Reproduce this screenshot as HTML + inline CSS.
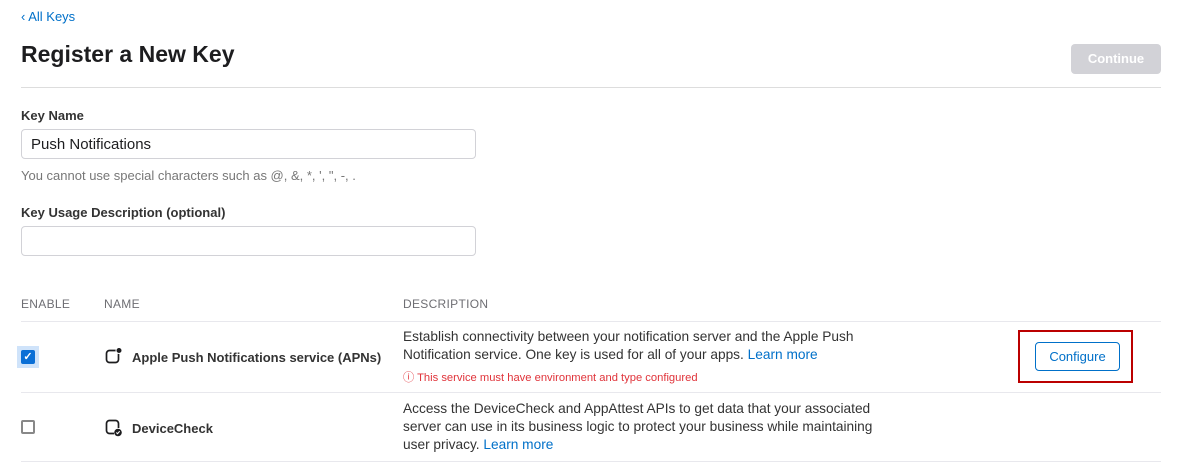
<!DOCTYPE html>
<html><head><meta charset="utf-8"><style>
*{margin:0;padding:0;box-sizing:border-box}
body{width:1183px;height:464px;background:#fff;font-family:"Liberation Sans",sans-serif;color:#1d1d1f;position:relative;overflow:hidden}
.a{position:absolute;white-space:nowrap}
.blue{color:#0070c9}
.inp{position:absolute;left:21px;width:455px;height:30px;border:1px solid #d2d2d7;border-radius:4px;font-size:15px;padding:6px 9px}
.lbl{font-size:13px;font-weight:bold;color:#333}
.hd{font-size:12px;color:#6e6e73;letter-spacing:.3px}
.hr{position:absolute;left:21px;width:1140px;height:1px;background:#e8e8ed}
.desc{font-size:13.7px;line-height:18px;color:#333}
</style></head><body>
<div class="a blue" style="left:21px;top:9px;font-size:13px">‹ All Keys</div>
<div class="a" style="left:21px;top:41px;font-size:23px;font-weight:bold">Register a New Key</div>
<div class="a" style="left:1071px;top:44px;width:90px;height:30px;background:#d2d2d7;border-radius:4px;color:#fff;font-size:13px;font-weight:bold;text-align:center;line-height:30px">Continue</div>
<div class="hr" style="top:87px;background:#ddd"></div>
<div class="a lbl" style="left:21px;top:108px">Key Name</div>
<div class="inp" style="top:129px">Push Notifications</div>
<div class="a" style="left:21px;top:168px;font-size:13px;color:#777">You cannot use special characters such as @, &amp;, *, ', ", -, .</div>
<div class="a lbl" style="left:21px;top:205px">Key Usage Description (optional)</div>
<div class="inp" style="top:226px"></div>
<div class="a hd" style="left:21px;top:297px">ENABLE</div>
<div class="a hd" style="left:104px;top:297px">NAME</div>
<div class="a hd" style="left:403px;top:297px">DESCRIPTION</div>
<div class="hr" style="top:321px"></div>
<div class="hr" style="top:392px"></div>
<div class="hr" style="top:461px"></div>
<div class="a" style="left:17px;top:346px;width:22px;height:22px;background:#cfe3fa"></div>
<div class="a" style="left:21px;top:350px;width:14px;height:14px;background:#0a6fd6;border-radius:2px;color:#fff;font-size:11px;text-align:center;line-height:14px;font-weight:bold">✓</div>
<div class="a" style="left:21px;top:420px;width:14px;height:14px;border:2px solid #888;border-radius:2px"></div>
<svg class="a" style="left:105px;top:347px" width="18" height="18" viewBox="0 0 18 18"><rect x="1.5" y="3.5" width="12" height="12" rx="3" fill="none" stroke="#1d1d1f" stroke-width="1.7"/><circle cx="14" cy="3.5" r="3" fill="#1d1d1f" stroke="#fff" stroke-width="1"/></svg>
<svg class="a" style="left:105px;top:419px" width="20" height="18" viewBox="0 0 20 18"><path d="M9 14.5H4.5a3 3 0 0 1-3-3v-7a3 3 0 0 1 3-3h6a3 3 0 0 1 3 3V9" fill="none" stroke="#1d1d1f" stroke-width="1.7"/><circle cx="13" cy="13.5" r="3.8" fill="#1d1d1f"/><path d="M11.3 13.5l1.2 1.2 2.2-2.4" fill="none" stroke="#fff" stroke-width="1.1"/></svg>
<div class="a" style="left:132px;top:350px;font-size:13px;font-weight:bold;color:#333">Apple Push Notifications service (APNs)</div>
<div class="a" style="left:132px;top:421px;font-size:13px;font-weight:bold;color:#333">DeviceCheck</div>
<div class="a desc" style="left:403px;top:328px">Establish connectivity between your notification server and the Apple Push<br>Notification service. One key is used for all of your apps. <span class="blue">Learn more</span></div>
<div class="a" style="left:403px;top:369px;font-size:11.2px;color:#e0333a">ⓘ This service must have environment and type configured</div>
<div class="a desc" style="left:403px;top:400px">Access the DeviceCheck and AppAttest APIs to get data that your associated<br>server can use in its business logic to protect your business while maintaining<br>user privacy. <span class="blue">Learn more</span></div>
<div class="a" style="left:1018px;top:330px;width:115px;height:53px;border:2px solid #b00"></div>
<div class="a blue" style="left:1035px;top:342px;width:85px;height:29px;border:1px solid #0070c9;border-radius:4px;font-size:13px;text-align:center;line-height:27px">Configure</div>
</body></html>
